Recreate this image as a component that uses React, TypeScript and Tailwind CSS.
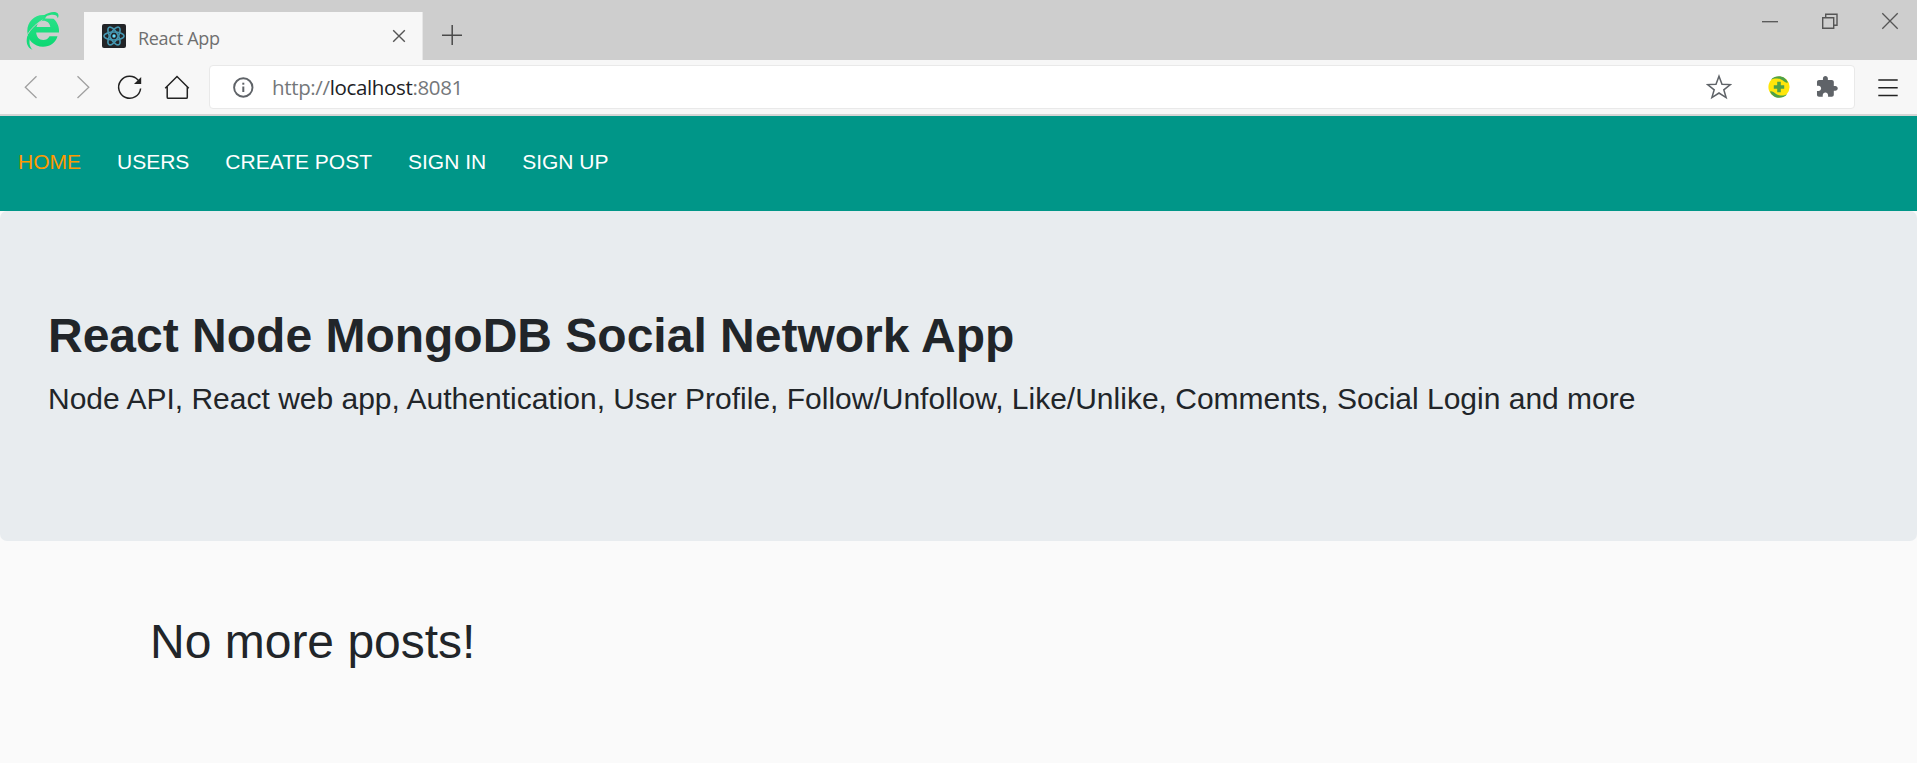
import React from "react";

type GlyphProps = {
  box: [number, number, number, number];
  className?: string;
  children: React.ReactNode;
};

/* All chrome glyphs share one drawing space; box is the part of it a glyph occupies. */
function Glyph({ box, className = "", children }: GlyphProps) {
  return (
    <svg
      className={`block shrink-0 ${className}`}
      width={box[2]}
      height={box[3]}
      viewBox={box.join(" ")}
      fill="none"
    >
      {children}
    </svg>
  );
}

function BrowserLogo() {
  return (
    <Glyph box={[24, 10, 38, 42]}>
      <defs>
        <linearGradient id="logo" x1="0" y1="0" x2="0" y2="1">
          <stop offset="0" stopColor="#2ce28a" />
          <stop offset="1" stopColor="#0cd873" />
        </linearGradient>
      </defs>
      <path
        fill="url(#logo)"
        fillRule="evenodd"
        d="M59 32.500C59.500 27.500 57.500 22 53.500 18.800L45 18.500L47 15.400C45.700 15.100 44.300 15 43 15C34 15 27.300 22 27.300 31C27.300 40 34 46.700 43 46.700C50 46.700 55.500 43 57.500 36.200H49.500C48 39 46 40 43.200 40C39 40 36.500 37 36.200 32.500ZM36.500 27C37.500 23 39.800 20.800 43.300 20.800C47 20.800 49.800 23 50.300 27Z"
      />
      <path d="M27.500 34.500C31 28.500 37 23 42.500 20" stroke="#cecece" strokeWidth="0.900" />
      <path fill="#1fdf81" d="M43.500 15.500C49 12 55 10.800 57.700 13.300C58.900 14.800 58.700 16.500 57.800 18.300C57.200 14.300 52 13.800 45 16.800Z" />
      <path fill="#14dc7a" d="M27.500 35.500C25.700 41.500 26.700 47.500 32.500 49.800C29.300 46 28.800 42 30.200 37.200Z" />
    </Glyph>
  );
}

function ReactFavicon() {
  return (
    <Glyph box={[102, 24, 24, 24]}>
      <rect x="102" y="24" width="24" height="24" rx="2" fill="#222427" />
      <g stroke="#4596b0" strokeWidth="1.600">
        <ellipse cx="114" cy="36" rx="10" ry="4" />
        <ellipse cx="114" cy="36" rx="10" ry="4" transform="rotate(60 114 36)" />
        <ellipse cx="114" cy="36" rx="10" ry="4" transform="rotate(120 114 36)" />
      </g>
      <circle cx="114" cy="36" r="1.700" fill="#61dafb" />
    </Glyph>
  );
}

function TitleBar() {
  return (
    <div className="flex h-[60px] bg-[#cecece]">
      <div className="flex w-[84px] pl-6 pt-[10px]">
        <BrowserLogo />
      </div>
      <div className="mt-3 flex h-12 w-[339px] border-r border-[#e6e6e6] bg-[#f7f7f7] pl-[18px] pt-3">
        <ReactFavicon />
        <span className="ml-3 mt-[2px] w-[254px] whitespace-nowrap font-['Open_Sans','Noto_Sans',sans-serif] text-[18px] leading-6 tracking-[-0.3px] text-[#6f6f6f]">
          React App
        </span>
        <Glyph box={[392, 24, 14, 24]}>
          <path d="M393.200 30.200L404.800 41.800M404.800 30.200L393.200 41.800" stroke="#555" strokeWidth="1.400" />
        </Glyph>
      </div>
      <Glyph box={[440, 23, 24, 24]} className="ml-[17px] mt-[23px]">
        <path d="M442 35.200H462M452.200 25V45" stroke="#4a4a4a" strokeWidth="1.500" />
      </Glyph>
      <div className="ml-auto flex gap-[38px] pr-[18px] pt-[10px]">
        <Glyph box={[1761, 10, 20, 22]}>
          <path d="M1762 21.700H1778" stroke="#555" strokeWidth="1.300" />
        </Glyph>
        <Glyph box={[1819, 10, 22, 22]}>
          <path d="M1822.700 17.700H1833.700V28.300H1822.700ZM1825.700 17.700V14.300H1837V25.200H1833.700" stroke="#555" strokeWidth="1.400" />
        </Glyph>
        <Glyph box={[1879, 10, 20, 22]}>
          <path d="M1882.300 13.300L1897.700 28.700M1897.700 13.300L1882.300 28.700" stroke="#555" strokeWidth="1.300" />
        </Glyph>
      </div>
    </div>
  );
}

function Toolbar() {
  return (
    <div className="flex h-14 border-b-2 border-[#d5d5d5] bg-[#f7f7f7]">
      <div className="flex w-[209px] shrink-0 pl-[22px] pt-3">
        <Glyph box={[22, 72, 18, 32]}>
          <path d="M36.500 76.300L25.300 87.300L36.500 98" stroke="#a0a0a0" strokeWidth="1.300" />
        </Glyph>
        <Glyph box={[74, 72, 18, 32]} className="ml-[34px]">
          <path d="M77.500 76.300L88.800 87.300L77.500 98" stroke="#a0a0a0" strokeWidth="1.300" />
        </Glyph>
        <Glyph box={[116, 72, 28, 32]} className="ml-6">
          <path d="M138.200 80.300A11 11 0 1 0 140.600 88.500" stroke="#222" strokeWidth="1.500" />
          <path d="M141.200 77V84H134Z" fill="#222" />
        </Glyph>
        <Glyph box={[162, 72, 30, 32]} className="ml-[18px]">
          <path d="M165.200 88.200L177 76.500L188.800 88.200M167.200 86.500V97.200Q167.200 98.300 168.300 98.300H186.200Q187.300 98.300 187.300 97.200V86.500" stroke="#222" strokeWidth="1.500" />
        </Glyph>
      </div>
      <div className="mt-[5px] flex h-[44px] w-[1646px] shrink-0 items-center rounded border border-[#e9e9e9] bg-white">
        <Glyph box={[230, 75, 24, 24]} className="ml-5">
          <circle cx="243.300" cy="87.500" r="9.200" stroke="#5f6368" strokeWidth="1.900" />
          <path d="M243.300 86.500V92" stroke="#5f6368" strokeWidth="2" />
          <path d="M243.300 82.700V84.700" stroke="#5f6368" strokeWidth="2" />
        </Glyph>
        <span className="ml-[18px] whitespace-nowrap font-['Open_Sans','Noto_Sans',sans-serif] text-[20.500px] leading-7 tracking-[-0.350px] text-[#74777a]">
          http://<span className="text-[#202124]">localhost</span>:8081
        </span>
        <div className="ml-auto flex pr-[13px]">
          <Glyph box={[1706, 73, 26, 28]}>
            <path
              d="M1719 76.200L1722 84.300L1730.400 84.600L1723.800 89.800L1726.100 97.600L1719 93L1711.900 97.600L1714.200 89.800L1707.600 84.600L1716 84.300Z"
              stroke="#5f6368"
              strokeWidth="1.500"
            />
          </Glyph>
          <Glyph box={[1766, 73, 26, 28]} className="ml-[34px]">
            <circle cx="1779" cy="87" r="10.600" fill="#ffe60a" />
            <path d="M1771 79.500C1776 74.500 1785 75 1788 82.500C1784.500 83.500 1783 79 1777.500 78.500C1774.500 78.300 1773 79 1771 79.500ZM1770 91.500C1773.500 90.500 1775 95 1780.500 95.500C1783.500 95.700 1785 95 1787 94.500C1782 99.500 1773 99 1770 91.500Z" fill="#4da148" />
            <path d="M1779 81.800V92.200M1773.800 87H1784.200" stroke="#4da148" strokeWidth="3.600" />
          </Glyph>
          <Glyph box={[1815, 73, 26, 28]} className="ml-[23px]">
            <path
              transform="translate(1815 75) scale(0.99)"
              d="M20.500 11H19V7c0-1.100-.9-2-2-2h-4V3.500C13 2.120 11.880 1 10.500 1S8 2.120 8 3.500V5H4c-1.100 0-1.990.9-1.990 2v3.800H3.500c1.490 0 2.700 1.210 2.700 2.700s-1.210 2.700-2.700 2.700H2V20c0 1.100.9 2 2 2h3.800v-1.500c0-1.490 1.210-2.700 2.700-2.700 1.490 0 2.700 1.210 2.700 2.700V22H17c1.100 0 2-.9 2-2v-4h1.500c1.380 0 2.500-1.120 2.500-2.500S21.880 11 20.500 11z"
              fill="#5f6368"
            />
          </Glyph>
        </div>
      </div>
      <Glyph box={[1876, 72, 24, 32]} className="ml-[21px] mt-3">
        <path d="M1878.300 80H1897.700M1878.300 87.800H1897.700M1878.300 95.500H1897.700" stroke="#222" strokeWidth="1.500" />
      </Glyph>
    </div>
  );
}

const links = ["Home", "Users", "Create Post", "Sign In", "Sign Up"];

export default function App() {
  return (
    <div className="h-[763px] w-[1917px] overflow-hidden bg-[#fafafa] font-['Liberation_Sans',Arial,sans-serif] text-[#212529]">
      <TitleBar />
      <Toolbar />
      <nav className="flex h-[95px] bg-[#009688]">
        {links.map((label, i) => (
          <a
            key={label}
            className={`mt-[30px] h-[32px] whitespace-nowrap px-[18px] text-[21px] uppercase leading-[32px] ${i === 0 ? "text-[#ff9900]" : "text-white"}`}
          >
            {label}
          </a>
        ))}
      </nav>
      <header className="h-[330px] rounded-[7px] bg-[#e8ecef] px-12 pt-24">
        <h2 className="whitespace-nowrap text-[48px] font-bold leading-[58px]">React Node MongoDB Social Network App</h2>
        <p className="mt-[11px] whitespace-nowrap text-[30px] leading-[45px]">
          Node API, React web app, Authentication, User Profile, Follow/Unfollow, Like/Unlike, Comments, Social Login and more
        </p>
      </header>
      <main className="px-[150px] pt-[72px]">
        <h2 className="whitespace-nowrap text-[48px] leading-[58px]">No more posts!</h2>
      </main>
    </div>
  );
}
